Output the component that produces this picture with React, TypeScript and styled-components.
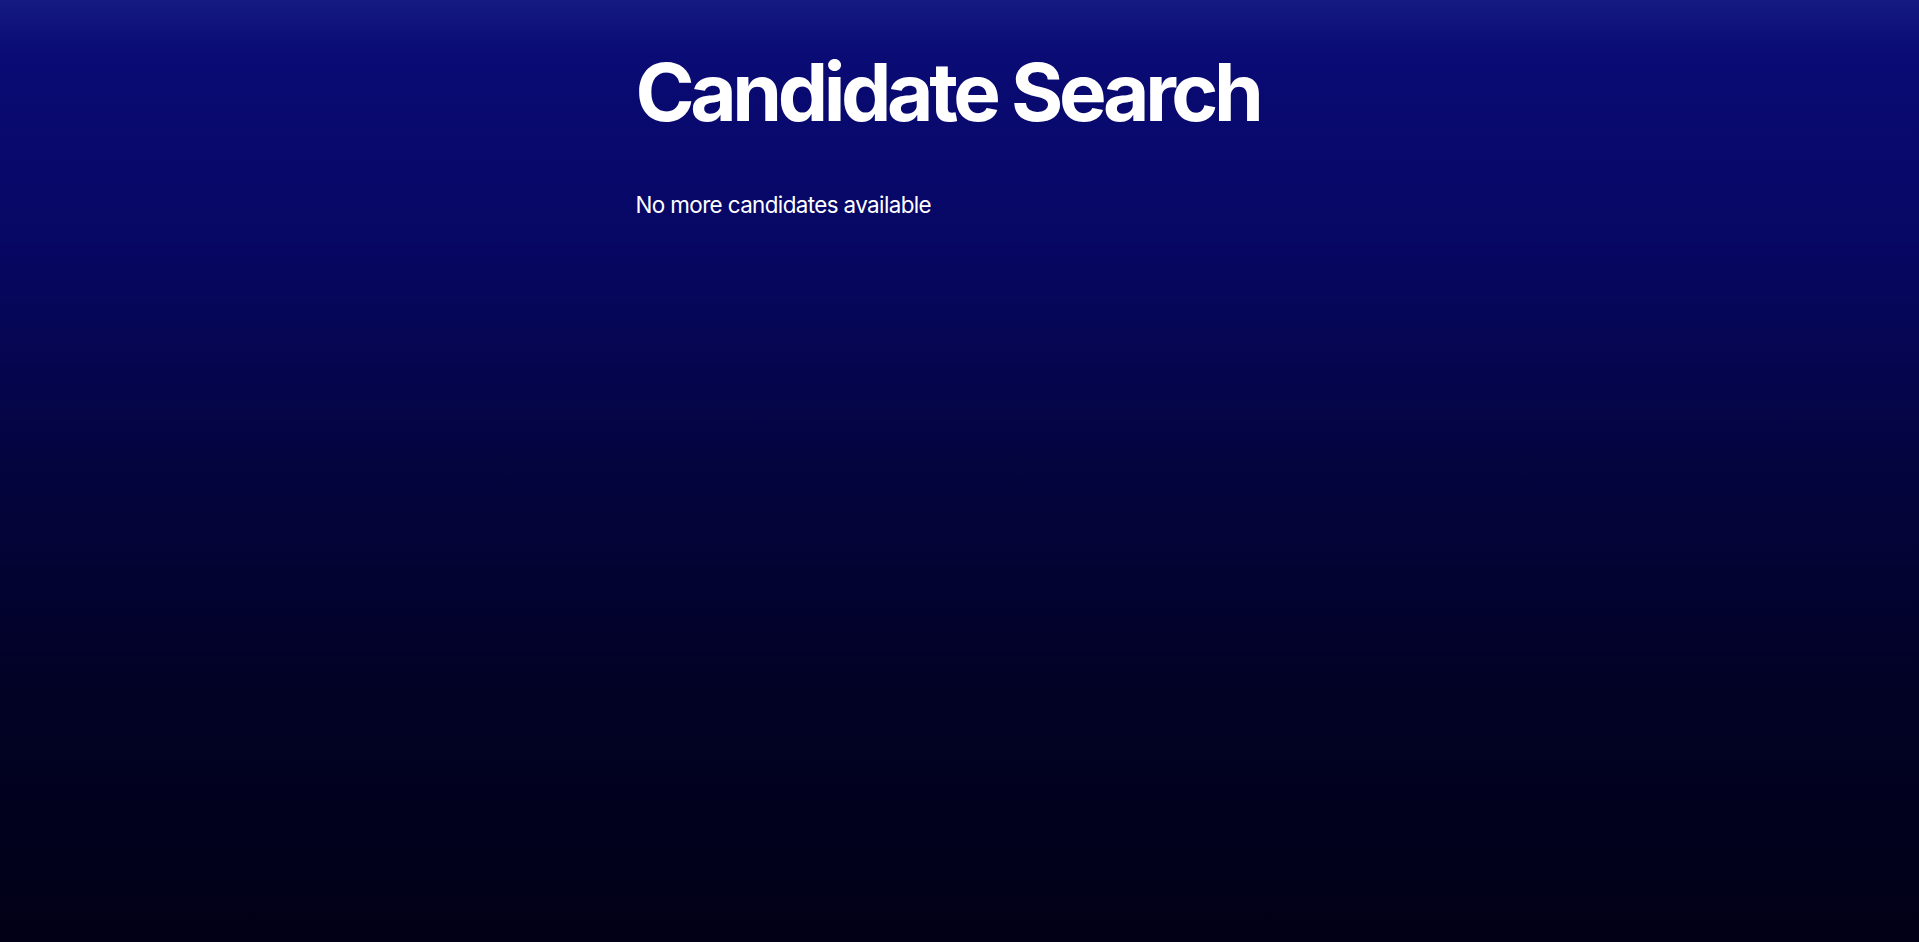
import React, { useEffect } from "react";
import styled, { createGlobalStyle } from "styled-components";

const GlobalStyle = createGlobalStyle`
  html {
    color-scheme: dark;
  }
  body {
    margin: 0;
    min-height: 1038px;
    font-family: Inter, "Noto Sans", "Liberation Sans", sans-serif;
    color: #ffffff;
    background: linear-gradient(
      to bottom,
      #06064a 0px,
      #141a82 96px,
      #0a0b74 150px,
      #070765 330px,
      #04043f 560px,
      #020226 780px,
      #010016 1038px
    );
    background-repeat: no-repeat;
    -webkit-font-smoothing: antialiased;
  }
`;

const Page = styled.main`
  display: flex;
  justify-content: center;
  padding: 140px 24px 0 0;
  min-height: 1038px;
  box-sizing: border-box;
`;

const Content = styled.section`
  display: flex;
  flex-direction: column;
  align-items: flex-start;
`;

const Title = styled.h1`
  margin: 0;
  font-family: Inter, "Noto Sans", sans-serif;
  font-weight: 700;
  font-size: 80px;
  line-height: 1.2;
  letter-spacing: -0.055em;
  color: #ffffff;
`;

const Message = styled.p`
  margin: 50px 0 0;
  font-family: Inter, "Noto Sans", sans-serif;
  font-weight: 400;
  font-size: 22.4px;
  line-height: 1.3;
  letter-spacing: -0.027em;
  color: #ffffff;
`;

export default function App() {
  useEffect(() => {
    window.scrollTo(0, document.documentElement.scrollHeight);
  }, []);

  return (
    <>
      <GlobalStyle />
      <Page>
        <Content>
          <Title>Candidate Search</Title>
          <Message>No more candidates available</Message>
        </Content>
      </Page>
    </>
  );
}
